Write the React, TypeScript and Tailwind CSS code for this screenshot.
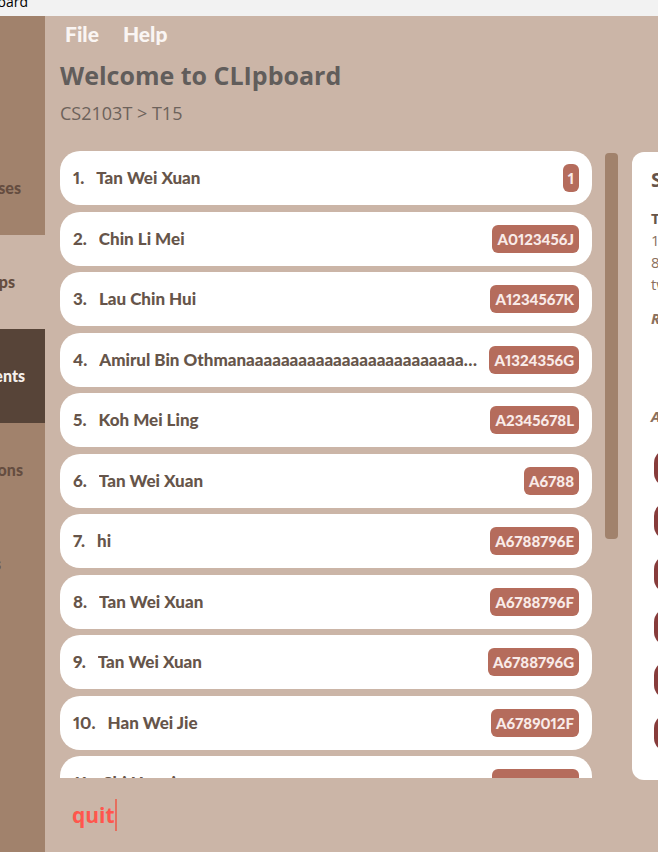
import { useState } from "react";

const students = [
  { name: "Tan Wei Xuan", id: "1" },
  { name: "Chin Li Mei", id: "A0123456J" },
  { name: "Lau Chin Hui", id: "A1234567K" },
  { name: "Amirul Bin Othmanaaaaaaaaaaaaaaaaaaaaaaaaaaaaaaaaaaaa", id: "A1324356G" },
  { name: "Koh Mei Ling", id: "A2345678L" },
  { name: "Tan Wei Xuan", id: "A6788" },
  { name: "hi", id: "A6788796E" },
  { name: "Tan Wei Xuan", id: "A6788796F" },
  { name: "Tan Wei Xuan", id: "A6788796G" },
  { name: "Han Wei Jie", id: "A6789012F" },
  { name: "Shi Huani", id: "A6789648J" },
];

const tabs = [
  { label: "Courses", style: "bg-[#a1826c] text-[#654d40]", pad: "pr-6" },
  { label: "Groups", style: "bg-[#cbb5a7] text-[#654d40]", pad: "pr-[30px]" },
  { label: "Students", style: "bg-[#574438] text-[#f5f0ec]", pad: "pr-5" },
  { label: "Sessions", style: "bg-[#a1826c] text-[#654d40]", pad: "pr-[22px]" },
  { label: "Tasks", style: "bg-[#a1826c] text-[#654d40]", pad: "pr-11" },
];

export default function App() {
  const [command, setCommand] = useState("quit");

  return (
    <div className="flex h-screen flex-col overflow-hidden bg-[#cbb5a7] font-['Open_Sans',sans-serif] text-[#66554a]">
      <header className="flex h-4 shrink-0 items-end overflow-hidden bg-[#f2f2f2] text-black">
        <div className="flex w-7 shrink-0 justify-end text-sm leading-[28px]">CLIpboard</div>
      </header>
      <div className="flex min-h-0 flex-1">
        <nav className="flex w-[45px] shrink-0 flex-col overflow-hidden bg-[#a1826c] pt-[125px] font-['Lato',sans-serif] text-base font-black">
          {tabs.map((t) => (
            <button
              key={t.label}
              className={`flex h-[94px] shrink-0 items-center justify-end ${t.style} ${t.pad}`}
            >
              {t.label}
            </button>
          ))}
        </nav>
        <main className="flex min-w-0 flex-1 flex-col pl-[15px]">
          <div className="flex h-9 shrink-0 items-center gap-6 pl-[5px] font-['Lato',sans-serif] text-[21px] font-black text-[#faf5f3]">
            <button>File</button>
            <button>Help</button>
          </div>
          <h1 className="h-12 shrink-0 text-[25px] leading-[46px] font-bold text-[#615d5b]">Welcome to CLIpboard</h1>
          <p className="h-[51px] shrink-0 text-lg leading-[26px] text-[#6d625b]">CS2103T &gt; T15</p>
          <div className="flex min-h-0 flex-1">
            <ol className="min-w-0 flex-1 overflow-hidden font-['Lato',sans-serif] font-black proportional-nums">
              {students.map((s, i) => (
                <li
                  key={i}
                  className="flex h-[54px] items-center rounded-[20px] bg-white px-[13px] odd:mb-[7px] even:mb-[6px]"
                >
                  <span className="mr-3 text-[17px]">{i + 1}.</span>
                  <span className="mr-1 min-w-0 flex-1 truncate text-[17px]">{s.name}</span>
                  <span className="flex h-7 shrink-0 items-center rounded-md bg-[#b56c5c] px-[5px] text-[15px] text-[#f9ebe8]">
                    {s.id}
                  </span>
                </li>
              ))}
            </ol>
            <div className="mr-[14px] ml-[12px] w-[14px] pt-[2px]">
              <div className="mx-auto h-[386px] w-[13px] rounded-[4px] bg-[#a1826c]" />
            </div>
            <aside className="mt-px -mb-[2px] w-[26px] shrink-0 overflow-hidden rounded-l-xl bg-white pt-[15px] pl-[19px]">
              <div className="w-60">
                <h2 className="text-xl leading-[26px] font-bold">Student</h2>
                <p className="mt-[14px] text-[15px] leading-[22px] font-bold">Tan Wei Xuan</p>
                <p className="text-[15px] leading-[22px] text-[#8b705d]">1</p>
                <p className="text-[15px] leading-[22px] text-[#8b705d]">87654321</p>
                <p className="text-[15px] leading-[22px] text-[#8b705d]">twx@u.nus.edu</p>
                <h3 className="mt-3 text-[15px] leading-[22px] font-bold text-[#8b705d] italic">Remarks</h3>
                <h3 className="mt-[76px] text-[15px] leading-[22px] font-bold text-[#8b705d] italic">Attendance</h3>
                <div className="mt-[22px] ml-[3px] flex flex-col gap-[15px]">
                  {[1, 2, 3, 4, 5, 6].map((n) => (
                    <div key={n} className="h-[38px] w-[38px] rounded-[14px] bg-[#873c3b]" />
                  ))}
                </div>
              </div>
            </aside>
          </div>
          <div className="h-[74px] shrink-0 pt-[21px] pl-3">
            <div className="flex h-8 w-fit items-center border-r-2 border-[#e56e5e]">
              <input
                aria-label="Command"
                value={command}
                onChange={(e) => setCommand(e.target.value)}
                className="field-sizing-content bg-transparent text-[21px] leading-8 font-bold text-[#ff564d] outline-none"
              />
            </div>
          </div>
        </main>
      </div>
    </div>
  );
}
